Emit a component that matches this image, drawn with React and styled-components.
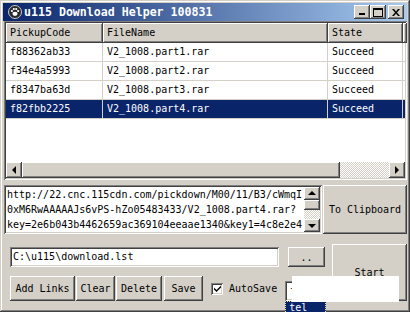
import React from 'react';
import styled, { createGlobalStyle, css } from 'styled-components';

const FACE = '#d4d0c8';

const raised = css`
  box-shadow: inset -1px -1px #404040, inset 1px 1px #ffffff,
    inset -2px -2px #808080, inset 2px 2px ${FACE};
`;

const sunken = css`
  box-shadow: inset 1px 1px #808080, inset -1px -1px #ffffff,
    inset 2px 2px #404040, inset -2px -2px ${FACE};
`;

const GlobalStyle = createGlobalStyle`
  html, body { margin: 0; padding: 0; background: ${FACE}; }
`;

const Window = styled.div`
  position: relative;
  width: 410px;
  height: 312px;
  box-sizing: border-box;
  padding: 3px;
  background: ${FACE};
  box-shadow: inset -1px -1px #404040, inset 1px 1px ${FACE},
    inset -2px -2px #808080, inset 2px 2px #ffffff;
  display: flex;
  flex-direction: column;
  font-family: "DejaVu Sans Mono", "Liberation Mono", monospace;
  font-size: 10px;
  color: #000;
  overflow: hidden;
`;

const TitleBar = styled.div`
  height: 18px;
  display: flex;
  align-items: center;
  background: linear-gradient(to right, #0a246a, #a6caf0);
  color: #fff;
  padding-left: 5px;
`;

const IconSlot = styled.span`
  flex: none;
  width: 14px;
  height: 14px;
  display: flex;
`;

const TitleText = styled.span`
  margin-left: 2px;
  font-weight: bold;
  font-size: 11.6px;
  white-space: pre;
  flex: 1;
`;

const CaptionButtons = styled.div`
  display: flex;
  flex: none;
  margin-right: 3px;
`;

const CaptionButton = styled.div`
  width: 16px;
  height: 14px;
  box-sizing: border-box;
  background: ${FACE};
  ${raised};
  margin-left: ${p => p.$gap || 0}px;
  display: flex;
  align-items: center;
  justify-content: center;
`;

const ListView = styled.div`
  margin-left: 1px;
  width: 403px;
  height: 159px;
  box-sizing: border-box;
  padding: 2px;
  background: #fff;
  ${sunken};
  display: flex;
  flex-direction: column;
`;

const HeaderRow = styled.div`
  display: flex;
  height: 20px;
  background: ${FACE};
  ${raised};
`;

const HeaderCell = styled.div`
  width: ${p => p.$w}px;
  flex: ${p => (p.$w ? 'none' : 1)};
  box-sizing: border-box;
  height: 20px;
  line-height: 20px;
  padding-left: 4px;
  background: ${FACE};
  ${raised};
`;

const ListBody = styled.div`
  flex: 1;
  background: #fff;
`;

const Row = styled.div`
  display: flex;
  height: 19px;
  box-sizing: border-box;
  border-bottom: 1px solid #d4d0c8;
  background: ${p => (p.$selected ? '#0a246a' : '#fff')};
  color: ${p => (p.$selected ? '#fff' : '#000')};
`;

const Cell = styled.div`
  width: ${p => p.$w}px;
  flex: none;
  box-sizing: border-box;
  line-height: 18px;
  padding-left: 4px;
  border-right: 1px solid #d4d0c8;
  white-space: pre;
`;

const HScroll = styled.div`
  display: flex;
  height: 16px;
`;

const ScrollButton = styled.div`
  width: 16px;
  height: ${p => p.$h || 16}px;
  flex: none;
  box-sizing: border-box;
  background: ${FACE};
  ${raised};
  display: flex;
  align-items: center;
  justify-content: center;
`;

const Thumb = styled.div`
  width: ${p => p.$w || 16}px;
  height: ${p => p.$h || 16}px;
  flex: none;
  box-sizing: border-box;
  background: ${FACE};
  ${raised};
`;

const Track = styled.div`
  flex: 1;
  background: repeating-conic-gradient(${FACE} 0 25%, #ffffff 0 50%) 0 0 / 2px 2px;
`;

const Tri = styled.span`
  width: 0;
  height: 0;
  border: 4px solid transparent;
  ${p => p.$dir === 'left' && 'border-right-color: #000; border-left-width: 0; margin-left: -1px;'}
  ${p => p.$dir === 'right' && 'border-left-color: #000; border-right-width: 0;'}
  ${p => p.$dir === 'up' && 'border-bottom-color: #000; border-top-width: 0; margin-top: -1px;'}
  ${p => p.$dir === 'down' && 'border-top-color: #000; border-bottom-width: 0;'}
`;

const LinkRow = styled.div`
  display: flex;
  margin-top: 5px;
  height: 49px;
`;

const LinkBox = styled.div`
  margin-left: 1px;
  width: 318px;
  box-sizing: border-box;
  padding: 2px;
  background: #fff;
  ${sunken};
  display: flex;
`;

const LinkText = styled.div`
  flex: 1;
  padding-left: 1px;
  line-height: 15px;
  white-space: pre;
  overflow: hidden;
`;

const VScroll = styled.div`
  width: 16px;
  display: flex;
  flex-direction: column;
`;

const Button = styled.div`
  width: ${p => p.$w}px;
  height: ${p => p.$h}px;
  margin-left: ${p => p.$ml || 0}px;
  flex: none;
  box-sizing: border-box;
  background: ${FACE};
  ${raised};
  display: flex;
  align-items: center;
  justify-content: center;
  white-space: pre;
`;

const Bottom = styled.div`
  display: flex;
  margin-top: 10px;
`;

const LeftColumn = styled.div`
  margin-left: 7px;
  width: 315px;
  flex: none;
  display: flex;
  flex-direction: column;
`;

const PathRow = styled.div`
  display: flex;
  margin-top: 3px;
`;

const PathInput = styled.div`
  width: 269px;
  height: 20px;
  box-sizing: border-box;
  padding: 0 3px;
  line-height: 20px;
  background: #fff;
  ${sunken};
  white-space: pre;
`;

const ButtonRow = styled.div`
  display: flex;
  align-items: center;
  margin-top: 9px;
  height: 25px;
`;

const CheckBox = styled.div`
  margin-left: 8px;
  width: 12px;
  height: 12px;
  flex: none;
  box-sizing: border-box;
  background: #fff;
  ${sunken};
  display: flex;
  align-items: center;
  justify-content: center;
`;

const Label = styled.span`
  margin-left: 6px;
  white-space: pre;
`;

const Combo = styled.div`
  position: relative;
  margin-left: 8px;
  margin-top: 4px;
  width: 40px;
  height: 20px;
  flex: none;
  box-sizing: border-box;
  padding: 0 5px;
  line-height: 20px;
  background: #fff;
  ${sunken};
`;

const DropItem = styled.div`
  position: absolute;
  left: 0;
  top: 20px;
  width: 41px;
  height: 13px;
  box-sizing: border-box;
  padding-left: 3px;
  line-height: 11px;
  background: #0a246a;
  color: #fff;
  border: 1px dotted #f0e68c;
`;

const Blank = styled.div`
  position: absolute;
  left: 292px;
  top: 276px;
  width: 107px;
  height: 26px;
  background: #fff;
`;

const PawIcon = () => (
  <svg width="14" height="14" viewBox="0 0 14 14">
    <circle cx="7" cy="7" r="6.5" fill="#2a2a2a" stroke="#c8c8c8" strokeWidth="1" />
    <ellipse cx="7" cy="8.8" rx="2.6" ry="2.1" fill="#fff" />
    <circle cx="3.9" cy="6" r="1.1" fill="#fff" />
    <circle cx="5.8" cy="4" r="1.1" fill="#fff" />
    <circle cx="8.2" cy="4" r="1.1" fill="#fff" />
    <circle cx="10.1" cy="6" r="1.1" fill="#fff" />
  </svg>
);

const MinGlyph = () => (
  <svg width="8" height="8" viewBox="0 0 8 8">
    <rect x="1" y="5" width="6" height="2" fill="#000" />
  </svg>
);

const MaxGlyph = () => (
  <svg width="10" height="9" viewBox="0 0 10 9">
    <rect x="0.5" y="1" width="9" height="7.5" fill="none" stroke="#000" strokeWidth="1" />
    <rect x="0" y="0" width="10" height="2" fill="#000" />
  </svg>
);

const CloseGlyph = () => (
  <svg width="8" height="7" viewBox="0 0 8 7">
    <path d="M0 0h2l2 2.5L6 0h2L5 3.5 8 7H6L4 4.5 2 7H0l3-3.5z" fill="#000" />
  </svg>
);

const CheckGlyph = () => (
  <svg width="7" height="7" viewBox="0 0 7 7">
    <path d="M0 2.5v2l2.5 2.5L7 2.5V0.5L2.5 5z" fill="#000" />
  </svg>
);

const columns = [97, 225, 75];

const rows = [
  ['f88362ab33', 'V2_1008.part1.rar', 'Succeed'],
  ['f34e4a5993', 'V2_1008.part2.rar', 'Succeed'],
  ['f8347ba63d', 'V2_1008.part3.rar', 'Succeed'],
  ['f82fbb2225', 'V2_1008.part4.rar', 'Succeed'],
];

const link = [
  'http://22.cnc.115cdn.com/pickdown/M00/11/B3/cWmqI',
  '0xM6RwAAAAAJs6vPS-hZo05483433/V2_1008.part4.rar?',
  'key=2e6b043b4462659ac369104eeaae1340&key1=4c8e2e4',
];

export default function App() {
  return (
    <>
      <GlobalStyle />
      <Window>
        <TitleBar>
          <IconSlot><PawIcon /></IconSlot>
          <TitleText>u115 Download Helper 100831</TitleText>
          <CaptionButtons>
            <CaptionButton><MinGlyph /></CaptionButton>
            <CaptionButton><MaxGlyph /></CaptionButton>
            <CaptionButton $gap={2}><CloseGlyph /></CaptionButton>
          </CaptionButtons>
        </TitleBar>

        <ListView>
          <HeaderRow>
            <HeaderCell $w={columns[0]}>PickupCode</HeaderCell>
            <HeaderCell $w={columns[1]}>FileName</HeaderCell>
            <HeaderCell $w={columns[2]}>State</HeaderCell>
            <HeaderCell />
          </HeaderRow>
          <ListBody>
            {rows.map((r, i) => (
              <Row key={r[0]} $selected={i === 3}>
                {r.map((c, j) => (
                  <Cell key={j} $w={columns[j]}>{c}</Cell>
                ))}
              </Row>
            ))}
          </ListBody>
          <HScroll>
            <ScrollButton><Tri $dir="left" /></ScrollButton>
            <Thumb $w={318} />
            <Track />
            <ScrollButton><Tri $dir="right" /></ScrollButton>
          </HScroll>
        </ListView>

        <LinkRow>
          <LinkBox>
            <LinkText>{link.join('\n')}</LinkText>
            <VScroll>
              <ScrollButton $h={13}><Tri $dir="up" /></ScrollButton>
              <Thumb $h={10} />
              <Track />
              <ScrollButton $h={13}><Tri $dir="down" /></ScrollButton>
            </VScroll>
          </LinkBox>
          <Button $w={84} $h={49} $ml={1}>To Clipboard</Button>
        </LinkRow>

        <Bottom>
          <LeftColumn>
            <PathRow>
              <PathInput>C:\u115\download.lst</PathInput>
              <Button $w={37} $h={20} $ml={9}>..</Button>
            </PathRow>
            <ButtonRow>
              <Button $w={65} $h={25}>Add Links</Button>
              <Button $w={39} $h={25} $ml={1}>Clear</Button>
              <Button $w={46} $h={25} $ml={1}>Delete</Button>
              <Button $w={39} $h={25} $ml={2}>Save</Button>
              <CheckBox><CheckGlyph /></CheckBox>
              <Label>AutoSave</Label>
              <Combo>
                t
                <DropItem>tel</DropItem>
              </Combo>
            </ButtonRow>
          </LeftColumn>
          <Button $w={75} $h={57} $ml={7}>Start</Button>
        </Bottom>

        <Blank />
      </Window>
    </>
  );
}
